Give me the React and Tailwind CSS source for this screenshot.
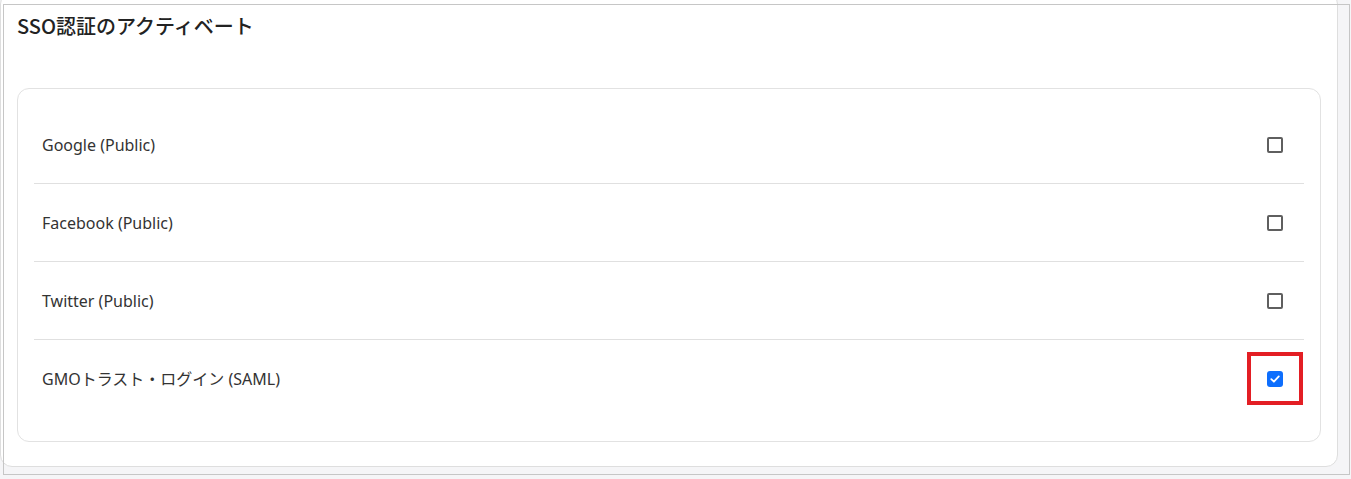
import React from "react";

const rows = [
  { label: "Google (Public)", checked: false },
  { label: "Facebook (Public)", checked: false },
  { label: "Twitter (Public)", checked: false },
  { label: "GMOトラスト・ログイン (SAML)", checked: true },
];

function Box({ checked }) {
  if (checked) {
    return (
      <div className="relative w-4 h-4 rounded-[3px] bg-[#0d6efd] flex items-center justify-center">
        <svg width="12" height="12" viewBox="0 0 12 12" fill="none">
          <path d="M2.3 6.2 L4.9 8.7 L9.8 3.4" stroke="white" strokeWidth="1.8" strokeLinecap="round" strokeLinejoin="round" />
        </svg>
        <div className="absolute left-[-20px] top-[-19px] w-[56px] h-[53px] border-4 border-[#e31e24]" />
      </div>
    );
  }
  return <div className="w-4 h-4 rounded-[2px] border-2 border-[#5f5f5f] bg-white" />;
}

export default function App() {
  return (
    <div className="relative w-[1351px] h-[479px] overflow-hidden bg-[#f5f5f7]" style={{ fontFamily: '"Noto Sans", "Noto Sans CJK JP", sans-serif' }}>
      <div className="-mt-[8px] w-[1338px] bg-white border border-[#dedede] rounded-[12px] px-4 pt-[19px] pb-6">
        <div className="text-[20px] leading-[28px] font-medium text-[#222]" style={{ fontFamily: '"Noto Sans CJK JP", "Noto Sans", sans-serif' }}>
          SSO認証のアクティベート
        </div>
        <div className="mt-[48px] border border-[#e2e2e2] rounded-[12px] px-4 pt-[17px] pb-[23px]">
          {rows.map((r, i) => (
            <div
              key={r.label}
              className={`h-[78px] flex items-center justify-between pl-[8px] pr-[21px] ${i < rows.length - 1 ? "border-b border-[#e0e0e0]" : ""}`}
            >
              <span className="text-[16px] text-[#333]" style={{ fontFamily: '"Noto Sans", "Noto Sans CJK JP", sans-serif' }}>{r.label}</span>
              <Box checked={r.checked} />
            </div>
          ))}
        </div>
      </div>
      <div className="absolute left-[3px] top-[4px] w-[1347px] h-[471px] border border-[#c6c6c6] pointer-events-none" />
    </div>
  );
}
